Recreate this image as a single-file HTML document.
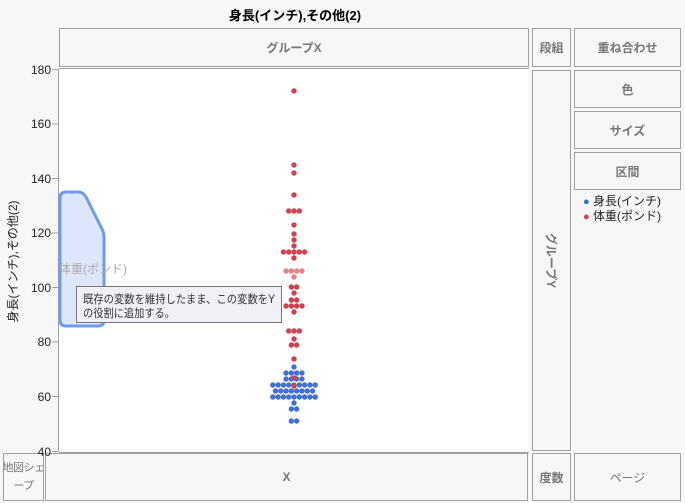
<!DOCTYPE html>
<html><head><meta charset="utf-8"><style>
body{margin:0;width:685px;height:503px;background:#f7f7f7;position:relative;overflow:hidden;font-family:"Liberation Sans","Noto Sans CJK JP",sans-serif;}
.b{position:absolute;border:1px solid #a0a0a0;background:#f7f7f7;color:#777;font-size:12px;display:flex;align-items:center;justify-content:center;box-sizing:border-box;font-weight:bold;}
.t{position:absolute;font-size:12px;color:#222;white-space:nowrap;}
</style></head><body>
<div class="t" style="left:0;width:590px;top:5px;text-align:center;font-weight:bold;font-size:13px;color:#000;">身長(インチ),その他(2)</div>
<div class="b" style="left:59px;top:28px;width:470px;height:39px;">グループX</div>
<div class="b" style="left:532px;top:28px;width:39px;height:39px;">段組</div>
<div class="b" style="left:574px;top:28px;width:107px;height:39px;">重ね合わせ</div>
<div class="b" style="left:532px;top:70px;width:39px;height:381px;"><span style="transform:rotate(90deg);white-space:nowrap;display:block;">グループY</span></div>
<div class="b" style="left:574px;top:70px;width:107px;height:38px;">色</div>
<div class="b" style="left:574px;top:111px;width:107px;height:38px;">サイズ</div>
<div class="b" style="left:574px;top:152px;width:107px;height:38px;">区間</div>
<div class="t" style="left:583px;top:192px;"><span style="color:#3f6fd8;font-size:11px;">●</span>&nbsp;身長(インチ)</div>
<div class="t" style="left:583px;top:207px;"><span style="color:#d1404f;font-size:11px;">●</span>&nbsp;体重(ポンド)</div>
<div class="b" style="left:3px;top:453px;width:41px;height:48px;font-weight:normal;line-height:18px;text-align:center;font-size:11px;white-space:nowrap;letter-spacing:-0.5px;">地図シェ<br>ープ</div>
<div class="b" style="left:45px;top:453px;width:483px;height:48px;">X</div>
<div class="b" style="left:532px;top:453px;width:39px;height:48px;">度数</div>
<div class="b" style="left:574px;top:453px;width:107px;height:48px;font-weight:normal;">ページ</div>
<div class="t" style="left:-60px;top:253px;width:145px;text-align:center;transform:rotate(-90deg);font-size:12px;">身長(インチ),その他(2)</div>
<svg style="position:absolute;left:0;top:0" width="685" height="503">
<rect x="59" y="69" width="470" height="383" fill="#fff"/>
<path d="M58.5 69V452M59 68.5H529M59 452.5H529" stroke="#a0a0a0" fill="none"/>
<g stroke="#a0a0a0"><path d="M52 69.5H58M52 124H58M52 178.5H58M52 233H58M52 287.5H58M52 342H58M52 396.5H58M52 451.5H58"/></g>
<g font-size="12" fill="#222" text-anchor="end" font-family="Liberation Sans,sans-serif">
<text x="51" y="74">180</text><text x="51" y="128">160</text><text x="51" y="183">140</text><text x="51" y="237">120</text><text x="51" y="292">100</text><text x="51" y="346">80</text><text x="51" y="401">60</text><text x="51" y="456">40</text></g>
<g id="d"></g>
<path d="M60 198Q60 192 66 192H78Q83 192 86 197L101 227Q104 232 104 238V320Q104 326 98 326H66Q60 326 60 320Z" fill="#dde6fa" stroke="#6e9af5" stroke-width="3"/>
<text x="59" y="273" font-size="12" fill="#aaa" font-family="Liberation Sans,Noto Sans CJK JP,sans-serif">体重(ポンド)</text>
<rect x="76.5" y="286.5" width="205" height="36" fill="#f0f1f6" stroke="#777"/>
<text x="83" y="303" font-size="11.5" fill="#333" textLength="192" lengthAdjust="spacingAndGlyphs" font-family="Liberation Sans,Noto Sans CJK JP,sans-serif">既存の変数を維持したまま、この変数をY</text>
<text x="83" y="317" font-size="11.5" fill="#333" textLength="92" lengthAdjust="spacingAndGlyphs" font-family="Liberation Sans,Noto Sans CJK JP,sans-serif">の役割に追加する。</text>
</svg>
<script>
var rows=[[91,1,'r'],[165,1,'r'],[173,1,'r'],[195,1,'r'],[211,3,'r'],[225,1,'r'],[234,1,'r'],[240,1,'r'],[246,1,'r'],[252,5,'r'],[258,1,'r'],[271,4,'p'],[277,1,'p'],[287,2,'r'],[293,1,'r'],[300,2,'r'],[306,4,'r'],[312,1,'r'],[331,3,'r'],[339,1,'r'],[345,2,'r'],[359,1,'r'],
[367,1,'b'],[373,4,'b'],[379,4,'b'],[385,9,'b'],[391,8,'b'],[397,9,'b'],[403,1,'b'],[409,2,'b'],[421,2,'b'],[378,1,'r'],[386,1,'r']];
var c={r:'#d1404f',p:'#e8808a',b:'#3f6fd8'},s='';
rows.forEach(function(r){for(var i=0;i<r[1];i++){var x=294+(i-(r[1]-1)/2)*5.3;s+='<circle cx="'+x+'" cy="'+r[0]+'" r="2.7" fill="'+c[r[2]]+'"/>';}});
document.getElementById('d').innerHTML=s;
</script>
</body></html>
